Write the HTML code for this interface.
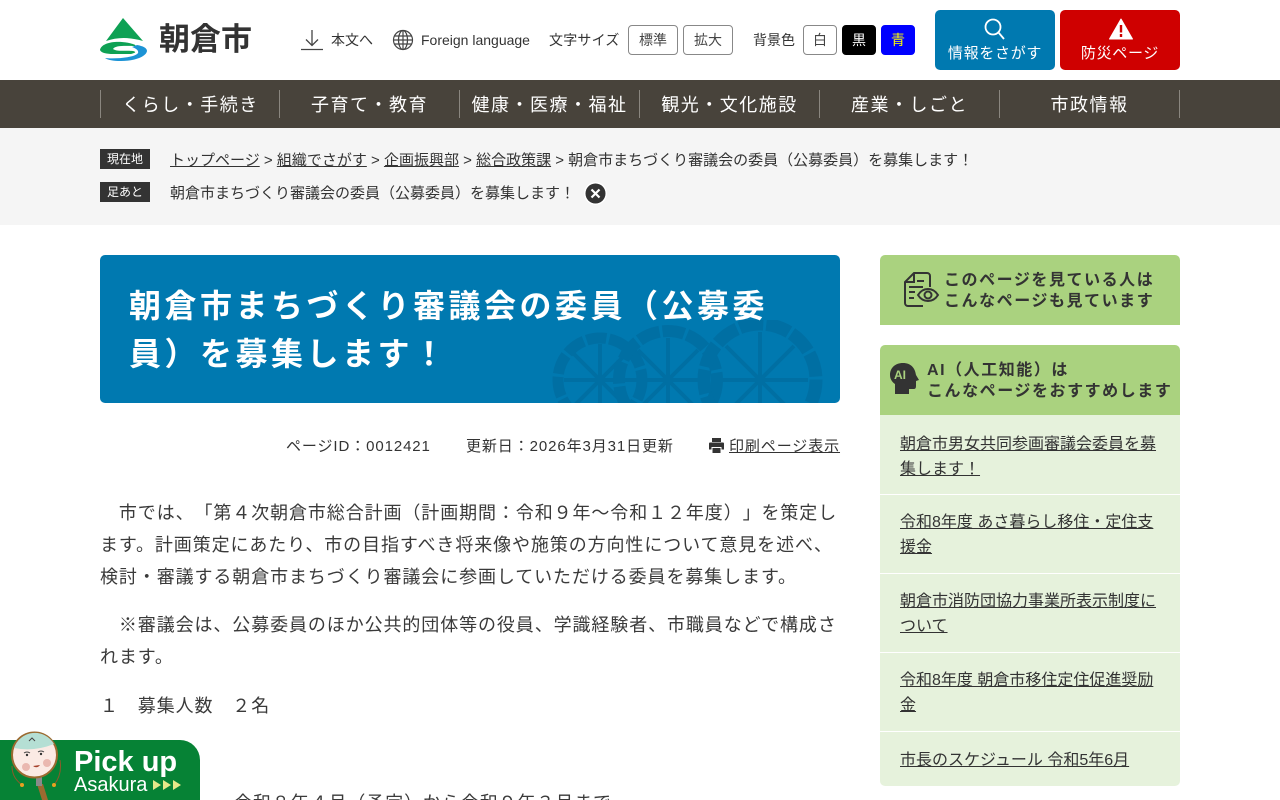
<!DOCTYPE html>
<html lang="ja"><head><meta charset="utf-8"><title>朝倉市</title>
<style>
*{box-sizing:border-box}
html,body{margin:0;padding:0;width:1280px;height:800px;overflow:hidden;background:#fff}
body{font-family:"Liberation Sans","Noto Sans CJK JP",sans-serif;text-spacing-trim:space-all;color:#333;position:relative}
.a{position:absolute;white-space:nowrap}
a{color:inherit}
.btn{position:absolute;border:1px solid #888;border-radius:4px;height:30px;top:25px;font-size:14px;line-height:28px;text-align:center;background:#fff;color:#444}
.nav{position:absolute;left:0;top:80px;width:1280px;height:48px;background:#48433b}
.nav div{position:absolute;top:10px;height:28px;width:180px;border-left:1px solid #8a867f;color:#fff;font-size:18px;line-height:31px;text-align:center;letter-spacing:1.500px;white-space:nowrap}
.tag{position:absolute;left:100px;width:50px;height:20px;background:#333;color:#fff;font-size:12px;line-height:20px;text-align:center}
.bc{font-size:15px;line-height:20px;color:#333}
.p{position:absolute;left:100px;width:740px;font-size:18px;line-height:32px;letter-spacing:.9px;color:#3a3a3a}
.side{position:absolute;left:880px;width:300px;background:#e6f2dc;font-size:16px;line-height:25px;color:#333;padding:0 20px}
.side a{display:block}
</style></head><body>

<svg class="a" style="left:99px;top:17px" width="50" height="46" viewBox="0 0 50 46">
<path d="M24 1L44 24Q24 18 7 24Z" fill="#0ea154"/>
<path d="M30 26C16 23 2 26 1 33C2 36 8 37 14 37L32 37C36 36 38 35 34 34C28 33 18 35 14 32C16 28 28 29 36 29C38 28 34 27 30 26Z" fill="#0ea154"/>
<path d="M38 28C44 29 48 31 48 34C47 40 35 44 22 44C14 44 9 43 6 41C14 42 36 41 39 36C40 33 36 31 33 30Z" fill="#1c93d5"/>
</svg>
<div class="a" style="left:159px;top:18px;font-size:31px;line-height:44px;font-weight:700;color:#333">朝倉市</div>

<svg class="a" style="left:301px;top:29px" width="23" height="22" viewBox="0 0 23 22" fill="none" stroke="#444" stroke-width="1.300"><path d="M11 1V16M5 10.500L11 16.500 17 10.500M0 20.500H22"/></svg>
<div class="a" style="left:331px;top:30px;font-size:14px;line-height:20px">本文へ</div>
<svg class="a" style="left:392px;top:29px" width="22" height="22" viewBox="0 0 22 22" fill="none" stroke="#444" stroke-width="1.200"><circle cx="11" cy="11" r="9.500"/><ellipse cx="11" cy="11" rx="4.500" ry="9.500"/><path d="M11 1.500V20.500M2.500 7H19.500M2.500 15H19.500M1.500 11H20.500"/></svg>
<div class="a" style="left:421px;top:30px;font-size:14px;line-height:20px">Foreign language</div>

<div class="a" style="left:549px;top:30px;font-size:14px;line-height:20px;letter-spacing:.2px">文字サイズ</div>
<div class="btn" style="left:628px;width:50px">標準</div>
<div class="btn" style="left:683px;width:50px">拡大</div>
<div class="a" style="left:753px;top:30px;font-size:14px;line-height:20px">背景色</div>
<div class="btn" style="left:803px;width:34px">白</div>
<div class="btn" style="left:842px;width:34px;background:#000;border-color:#000;color:#fff">黒</div>
<div class="btn" style="left:881px;width:34px;background:#00f;border-color:#00f;color:#ff0">青</div>

<div class="a" style="left:935px;top:10px;width:120px;height:60px;background:#0079b0;border-radius:5px"></div>
<svg class="a" style="left:983px;top:17px" width="24" height="24" viewBox="0 0 24 24" fill="none" stroke="#fff" stroke-width="1.800"><circle cx="10" cy="10" r="7.500"/><path d="M15.500 15.500L21 22"/></svg>
<div class="a" style="left:935px;top:43px;width:120px;text-align:center;color:#fff;font-size:15px;line-height:22px;letter-spacing:.7px">情報をさがす</div>
<div class="a" style="left:1060px;top:10px;width:120px;height:60px;background:#cf0000;border-radius:5px"></div>
<svg class="a" style="left:1109px;top:18px" width="24" height="22" viewBox="0 0 24 22"><path d="M12 1L23.500 21H.5Z" fill="#fff" stroke="#fff" stroke-linejoin="round"/><path d="M12 7V14.500M12 16V19" stroke="#cf0000" stroke-width="2.400"/></svg>
<div class="a" style="left:1060px;top:43px;width:120px;text-align:center;color:#fff;font-size:15px;line-height:22px;letter-spacing:.7px">防災ページ</div>

<div class="nav">
<div style="left:100px">くらし・手続き</div>
<div style="left:279px">子育て・教育</div>
<div style="left:459px">健康・医療・福祉</div>
<div style="left:639px">観光・文化施設</div>
<div style="left:819px">産業・しごと</div>
<div style="left:999px;width:181px;border-right:1px solid #8a867f">市政情報</div>
</div>

<div class="a" style="left:0;top:128px;width:1280px;height:97px;background:#f5f5f5"></div>
<div class="tag" style="top:149px">現在地</div>
<div class="a bc" style="left:170px;top:151px"><a href="#">トップページ</a> &gt; <a href="#">組織でさがす</a> &gt; <a href="#">企画振興部</a> &gt; <a href="#">総合政策課</a> &gt; 朝倉市まちづくり審議会の委員（公募委員）を募集します！</div>
<div class="tag" style="top:182px">足あと</div>
<div class="a bc" style="left:170px;top:184px">朝倉市まちづくり審議会の委員（公募委員）を募集します！</div>
<svg class="a" style="left:584px;top:182px" width="23" height="23" viewBox="0 0 23 23"><circle cx="11.500" cy="11.500" r="11.500" fill="#fff"/><circle cx="11.500" cy="11.500" r="10" fill="#333"/><path d="M7.500 7.500L15.500 15.500M15.500 7.500L7.500 15.500" stroke="#fff" stroke-width="2.200"/></svg>

<div class="a" style="left:100px;top:255px;width:740px;height:148px;background:#0079b0;border-radius:5px;overflow:hidden">
<svg style="position:absolute;left:448px;top:65px" width="280" height="83" viewBox="0 0 280 83" fill="none" stroke="#006fa3">
<g transform="translate(52 60)"><circle r="42" stroke-width="11" stroke-dasharray="20 3"/><path d="M-36 0H36M0-36V36M-26-26L26 26M26-26L-26 26" stroke-width="4"/></g>
<g transform="translate(120 60)"><circle r="49" stroke-width="12" stroke-dasharray="22 3"/><path d="M-42 0H42M0-42V42M-30-30L30 30M30-30L-30 30" stroke-width="4"/></g>
<g transform="translate(212 60)"><circle r="56" stroke-width="13" stroke-dasharray="24 3"/><path d="M-48 0H48M0-48V48M-34-34L34 34M34-34L-34 34" stroke-width="4"/></g>
</svg>
<div style="position:absolute;left:29px;top:27px;width:655px;white-space:normal;font-size:32px;line-height:48px;font-weight:700;color:#fff;letter-spacing:3.500px">朝倉市まちづくり審議会の委員（公募委員）を募集します！</div>
</div>

<div class="a" style="left:286px;top:437px;font-size:15px;line-height:20px;letter-spacing:.9px">ページID：0012421</div>
<div class="a" style="left:466px;top:437px;font-size:15px;line-height:20px;letter-spacing:.9px">更新日：2026年3月31日更新</div>
<svg class="a" style="left:709px;top:438px" width="15" height="15" viewBox="0 0 15 15"><path d="M3 0H12V4H3ZM1 4.500H14A1 1 0 0 1 15 5.500V11.500H12.500V9H2.500V11.500H0V5.500A1 1 0 0 1 1 4.500ZM3.500 10H11.500V15H3.500Z" fill="#333"/></svg>
<div class="a" style="left:729px;top:437px;font-size:15px;line-height:20px;letter-spacing:.9px"><a href="#">印刷ページ表示</a></div>

<div class="p" style="top:497px">　市では、「第４次朝倉市総合計画（計画期間：令和９年～令和１２年度）」を策定します。計画策定にあたり、市の目指すべき将来像や施策の方向性について意見を述べ、検討・審議する朝倉市まちづくり審議会に参画していただける委員を募集します。</div>
<div class="p" style="top:609px">　※審議会は、公募委員のほか公共的団体等の役員、学識経験者、市職員などで構成されます。</div>
<div class="p" style="top:690px">１　募集人数　２名</div>
<div class="p" style="top:787px;left:234px;width:500px">令和８年４月（予定）から令和９年３月まで</div>

<div class="a" style="left:880px;top:255px;width:300px;height:70px;background:#aad27f;border-radius:5px 5px 0 0"></div>
<svg class="a" style="left:903px;top:271px" width="37" height="37" viewBox="0 0 37 37" fill="none" stroke="#333" stroke-width="2"><path d="M27 16V5A3 3 0 0 0 24 2H11L2 11V32A3 3 0 0 0 5 35H20"/><path d="M11 2V11H2M14 10H21M6 16H20M6 21H12M6 27H11"/><path d="M15 24C20 16 30 16 35 24 30 32 20 32 15 24Z"/><circle cx="25" cy="24" r="3.500"/></svg>
<div class="a" style="left:944px;top:270px;font-size:16px;line-height:21px;font-weight:700;letter-spacing:1.550px;color:#333">このページを見ている人は<br>こんなページも見ています</div>

<div class="a" style="left:880px;top:345px;width:300px;height:70px;background:#aad27f;border-radius:5px 5px 0 0"></div>
<svg class="a" style="left:889px;top:362px" width="30" height="33" viewBox="0 0 30 33"><path d="M14 1C6 1 1 6 1 13c0 4 2 7 5 9v10h14v-5h5c2 0 2-2 2-4v-4l3-1-3-5C26 6 22 1 14 1Z" fill="#333"/><text x="5" y="17" font-size="12" font-weight="700" fill="#aad27f" font-family="Liberation Sans,sans-serif">AI</text></svg>
<div class="a" style="left:927px;top:360px;font-size:16px;line-height:21px;font-weight:700;letter-spacing:1.550px;color:#333">AI（人工知能）は<br>こんなページをおすすめします</div>

<div class="side" style="top:415px;height:79px;padding-top:17px"><a href="#">朝倉市男女共同参画審議会委員を募集します！</a></div>
<div class="side" style="top:495px;height:78px;padding-top:15px"><a href="#">令和8年度 あさ暮らし移住・定住支援金</a></div>
<div class="side" style="top:574px;height:78px;padding-top:15px"><a href="#">朝倉市消防団協力事業所表示制度について</a></div>
<div class="side" style="top:653px;height:78px;padding-top:15px"><a href="#">令和8年度 朝倉市移住定住促進奨励金</a></div>
<div class="side" style="top:732px;height:54px;padding-top:16px;border-radius:0 0 5px 5px"><a href="#">市長のスケジュール 令和5年6月</a></div>

<div class="a" style="left:0;top:740px;width:200px;height:60px;background:#068235;border-radius:0 20px 0 0"></div>
<svg class="a" style="left:0;top:728px" width="70" height="72" viewBox="0 0 70 72">
<path d="M12 38C12 48 17 53 22 57M60 32C62 44 58 52 54 57" fill="none" stroke="#8a5a2a"/><circle cx="22" cy="57" r="2" fill="#e8a020"/><circle cx="54" cy="57" r="2" fill="#e8a020"/>
<path d="M37 56H43L48 72H42Z" fill="#9b6a30"/><rect x="36" y="49" width="6" height="9" fill="#8a8a8a"/>
<circle cx="34.500" cy="27" r="22.500" fill="#fbeae4" stroke="#9b6a30" stroke-width="2"/>
<path d="M14 20A22 22 0 0 1 54 16Q34 24 14 20Z" fill="#b5dfd4"/>
<path d="M29 13l3-3 3 3M24 25q3-2 6 0M38 24q3-2 6 0" stroke="#444" fill="none"/><circle cx="27" cy="27" r="1.200" fill="#333"/><circle cx="41" cy="26" r="1.200" fill="#333"/><circle cx="26" cy="39" r="4" fill="#eab8b0"/><circle cx="47" cy="35" r="4" fill="#eab8b0"/><path d="M33 38q4 3 7-1Z" fill="#a5402a"/>
</svg>
<div class="a" style="left:74px;top:745px;font-size:29px;line-height:34px;font-weight:700;color:#fff">Pick up</div>
<div class="a" style="left:74px;top:773px;font-size:20px;line-height:24px;color:#fff">Asakura</div>
<svg class="a" style="left:153px;top:779px" width="28" height="12" viewBox="0 0 28 12" fill="#e6e88a"><path d="M0 1L8 6 0 11ZM10 1L18 6 10 11ZM20 1L28 6 20 11Z"/></svg>
</body></html>
